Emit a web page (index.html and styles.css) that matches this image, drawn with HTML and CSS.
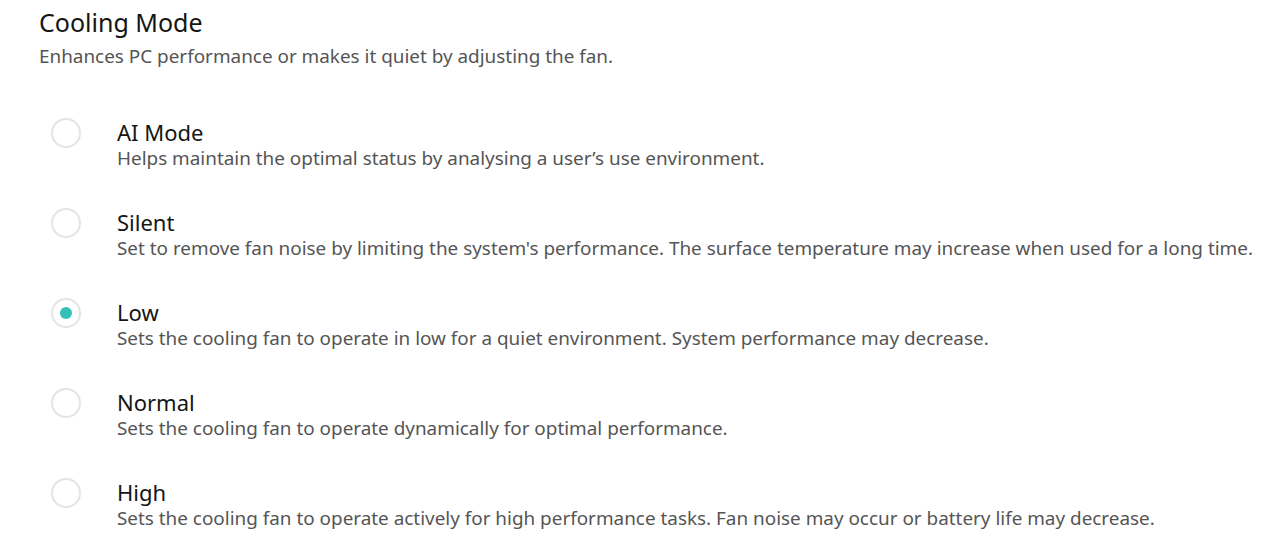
FILE: index.html
```html
<html>
<head>
    <meta charset="utf-8" />
    <title>Cooling Mode</title>
    <link rel="stylesheet" href="styles.css">
</head>
<body>
    <div class="page">
        <h2 class="title">Cooling Mode</h2>
        <p class="subtitle">Enhances PC performance or makes it quiet by adjusting the fan.</p>

        <!--Modes-->
        <div class="modes">
            <label class="mode">
                <input type="radio" name="cooling" value="ai" />
                <span class="radio"></span>
                <span class="text">
                    <span class="name">AI Mode</span>
                    <span class="desc">Helps maintain the optimal status by analysing a user’s use environment.</span>
                </span>
            </label>
            <label class="mode">
                <input type="radio" name="cooling" value="silent" />
                <span class="radio"></span>
                <span class="text">
                    <span class="name">Silent</span>
                    <span class="desc">Set to remove fan noise by limiting the system's performance. The surface temperature may increase when used for a long time.</span>
                </span>
            </label>
            <label class="mode">
                <input type="radio" name="cooling" value="low" checked />
                <span class="radio"></span>
                <span class="text">
                    <span class="name">Low</span>
                    <span class="desc">Sets the cooling fan to operate in low for a quiet environment. System performance may decrease.</span>
                </span>
            </label>
            <label class="mode">
                <input type="radio" name="cooling" value="normal" />
                <span class="radio"></span>
                <span class="text">
                    <span class="name">Normal</span>
                    <span class="desc">Sets the cooling fan to operate dynamically for optimal performance.</span>
                </span>
            </label>
            <label class="mode">
                <input type="radio" name="cooling" value="high" />
                <span class="radio"></span>
                <span class="text">
                    <span class="name">High</span>
                    <span class="desc">Sets the cooling fan to operate actively for high performance tasks. Fan noise may occur or battery life may decrease.</span>
                </span>
            </label>
        </div>
    </div>
</body>
</html>
```

FILE: styles.css
```css
body {
    margin: 0;
    background: #fff;
    font-family: "Noto Sans", "Open Sans", sans-serif;
}

.page {
    padding: 7px 0 0 39px;
}

.title {
    margin: 0;
    font-size: 25px;
    line-height: 30px;
    font-weight: normal;
    color: #151515;
}

.subtitle {
    margin: 7px 0 0 0;
    font-size: 18.9px;
    line-height: 24px;
    color: #555;
}

.modes {
    display: flex;
    flex-direction: column;
    gap: 39px;
    margin-top: 51px;
    padding-left: 12px;
}

    .mode {
        display: flex;
        align-items: flex-start;
        gap: 36px;
        cursor: pointer;
    }

    .mode input {
        display: none;
    }

    .mode .radio {
        flex: none;
        width: 26px;
        height: 26px;
        margin-top: -1px;
        border: 2px solid #e4e4e4;
        border-radius: 50%;
        box-shadow: 0 0 1px rgba(0, 0, 0, .08);
        display: flex;
        align-items: center;
        justify-content: center;
    }

    .mode input:checked + .radio::after {
        content: "";
        width: 12px;
        height: 12px;
        border-radius: 50%;
        background: #33c0b7;
    }

    .mode .text {
        display: flex;
        flex-direction: column;
    }

    .mode .name {
        font-size: 22px;
        line-height: 27px;
        color: #151515;
    }

    .mode .desc {
        font-size: 18.9px;
        line-height: 24px;
        color: #555;
    }
```
